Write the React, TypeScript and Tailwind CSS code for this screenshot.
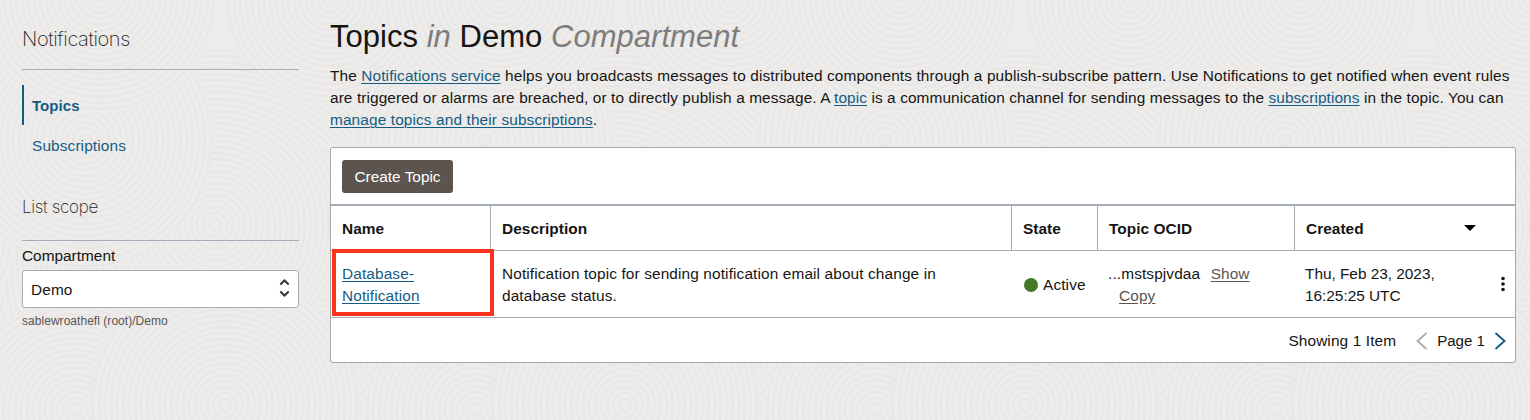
import React from "react";

type Ring = { x: number; y: number; r: number };

const rings: Ring[] = [
  { x: 215, y: 260, r: 215 },
  { x: 330, y: 0, r: 105 },
  { x: 320, y: 240, r: 95 },
  { x: 215, y: 225, r: 130 },
  { x: 85, y: 140, r: 128 },
  { x: 100, y: -5, r: 118 },
  { x: 75, y: 410, r: 110 },
  { x: 225, y: 405, r: 132 },
];

function Backdrop() {
  const radii = (r: number) => Array.from({ length: Math.floor(r / 6) }, (_, i) => (i + 1) * 6);
  return (
    <svg className="pointer-events-none absolute inset-0" width="1530" height="420" aria-hidden="true">
      <defs>
        <pattern id="waves" width="400" height="420" patternUnits="userSpaceOnUse">
          {rings.flatMap((c, n) =>
            [-400, 0, 400].map((dx) => (
              <g key={`${n}:${dx}`} fill="none" stroke="#e8e7e5" strokeWidth="1.8">
                <circle cx={c.x + dx} cy={c.y} r={c.r} fill="#edecea" stroke="none" />
                {radii(c.r).map((r) => (
                  <circle key={r} cx={c.x + dx} cy={c.y} r={r} />
                ))}
              </g>
            )),
          )}
        </pattern>
      </defs>
      <rect width="1530" height="420" fill="url(#waves)" />
    </svg>
  );
}

function Sidebar() {
  return (
    <aside className="w-[277px] shrink-0">
      <h2 className="h-[70px] border-b border-[#a5adb8] pt-[25px] font-['Inter'] text-[20px] font-extralight leading-[28px] tracking-[-0.4px] whitespace-nowrap text-[#222]">
        Notifications
      </h2>
      <nav className="mt-[15px] text-[#145c84]">
        <a className="flex h-10 items-center border-l-2 border-[#145c84] pt-0.5 pl-2 text-[15px] font-bold tracking-[0.05px]">Topics</a>
        <a className="flex h-10 items-center pt-0.5 pl-2.5">Subscriptions</a>
      </nav>
      <h3 className="mt-[30px] h-[46px] border-b border-[#a5adb8] font-['Inter'] text-[17px] font-extralight leading-[24px] tracking-[-0.3px] whitespace-nowrap text-[#222]">
        List scope
      </h3>
      <div className="mt-1 leading-[22px] tracking-normal">Compartment</div>
      <div className="mt-[3px] flex h-[38px] items-center justify-between rounded-[3px] border border-[#a5adb8] bg-white pr-2 pl-2">
        <span className="pt-0.5">Demo</span>
        <svg width="11" height="18" viewBox="0 0 11 18" fill="none" stroke="#333" strokeWidth="2" className="-mt-0.5">
          <path d="M1.3 5.5 5.5 1.5 9.7 5.5M1.3 12.5l4.2 4 4.2-4" />
        </svg>
      </div>
      <div className="mt-1 text-[12px] leading-[18px] tracking-[0.04px] text-[#5a5552]">sablewroathefl (root)/Demo</div>
    </aside>
  );
}

function Link({ children }: { children: React.ReactNode }) {
  return <a className="text-[#145c84] underline decoration-1 underline-offset-2">{children}</a>;
}

const columns = "grid grid-cols-[160px_521px_86px_197px_220px]";

export default function App() {
  return (
    <div className="relative h-[420px] w-[1530px] overflow-hidden bg-[#edecea] font-['Liberation_Sans',sans-serif] text-[15.4px] leading-[22px] tracking-[0.12px] text-[#161513]">
      <Backdrop />
      <div className="relative flex gap-[31px] pl-[22px]">
        <Sidebar />
        <main className="w-[1186px] shrink-0">
          <h1 className="mt-[17px] h-10 text-[31px] leading-10 tracking-[0.03px] whitespace-nowrap">
            Topics <i className="text-[#7d7d7d]">in</i> Demo <i className="text-[#7d7d7d]">Compartment</i>
          </h1>
          <div className="mt-2 whitespace-nowrap">
            <p>
              The <Link>Notifications service</Link> helps you broadcasts messages to distributed components through a
              publish-subscribe pattern. Use Notifications to get notified when event rules
            </p>
            <p className="tracking-[0.095px]">
              are triggered or alarms are breached, or to directly publish a message. A <Link>topic</Link> is a
              communication channel for sending messages to the <Link>subscriptions</Link> in the topic. You can
            </p>
            <p>
              <Link>manage topics and their subscriptions</Link>.
            </p>
          </div>
          <section className="mt-4 h-[216px] rounded-[3px] border border-[#aaa6a1] bg-white">
            <div className="flex h-14 items-center pl-[11px]">
              <button className="h-[33px] w-[111px] rounded-[3px] bg-[#5b544f] pt-0.5 tracking-normal text-white">Create Topic</button>
            </div>
            <div className={`${columns} h-[47px] border-t-2 border-b border-t-[#a5adb8] border-b-[#b0aeab] font-bold tracking-[0.05px]`}>
              <div className="flex items-center border-r border-[#a5adb8] pt-0.5 pl-[11px]">Name</div>
              <div className="flex items-center border-r border-[#a5adb8] pt-0.5 pl-[11px]">Description</div>
              <div className="flex items-center border-r border-[#a5adb8] pt-0.5 pl-[11px]">State</div>
              <div className="flex items-center border-r border-[#a5adb8] pt-0.5 pl-[11px]">Topic OCID</div>
              <div className="flex items-center justify-between pr-[39px] pl-[11px]">
                <span className="pt-0.5">Created</span>
                <svg width="12" height="6" viewBox="0 0 12 6">
                  <path d="M0 0h12L6 6z" fill="#000" />
                </svg>
              </div>
            </div>
            <div className={`${columns} relative h-[67px] items-center border-b border-[#a5adb8]`}>
              <div className="pt-0.5 pl-[11px]">
                <Link>
                  Database-
                  <br />
                  Notification
                </Link>
              </div>
              <div className="pt-0.5 pl-[11px]">
                Notification topic for sending notification email about change in
                <br />
                database status.
              </div>
              <div className="flex items-center gap-[5px] pt-px pl-3">
                <span className="size-[14px] rounded-full bg-[#427a26]" />
                <span className="pt-px">Active</span>
              </div>
              <div className="pt-0.5 pl-[10px]">
                ...mstspjvdaa <a className="ml-[6px] text-[#5b544f] underline underline-offset-2">Show</a>
                <br />
                <a className="ml-[11px] text-[#5b544f] underline underline-offset-2">Copy</a>
              </div>
              <div className="flex items-center justify-between pr-[10px] pl-[10px] tracking-[-0.02px]">
                <span className="pt-0.5">
                  Thu, Feb 23, 2023,
                  <br />
                  16:25:25 UTC
                </span>
                <svg width="4" height="16" viewBox="0 0 4 16" fill="#161513">
                  <circle cx="2" cy="2.5" r="1.8" />
                  <circle cx="2" cy="8" r="1.8" />
                  <circle cx="2" cy="13.5" r="1.8" />
                </svg>
              </div>
              <div className="absolute -top-[2px] left-[1px] h-[67px] w-[162px] border-4 border-[#fc341c]" />
            </div>
            <div className="flex h-11 items-center justify-end pr-[9px] pt-0.5">
              <span>Showing 1 Item</span>
              <svg className="ml-5" width="12" height="18" viewBox="0 0 12 18" fill="none" stroke="#aaa" strokeWidth="1.7">
                <path d="M10.5 1 1.5 9l9 8" />
              </svg>
              <span className="ml-[9px] text-[15.1px] tracking-normal">Page 1</span>
              <svg className="ml-[9px]" width="12" height="18" viewBox="0 0 12 18" fill="none" stroke="#145c84" strokeWidth="1.9">
                <path d="m1.5 1 9 8-9 8" />
              </svg>
            </div>
          </section>
        </main>
      </div>
    </div>
  );
}
